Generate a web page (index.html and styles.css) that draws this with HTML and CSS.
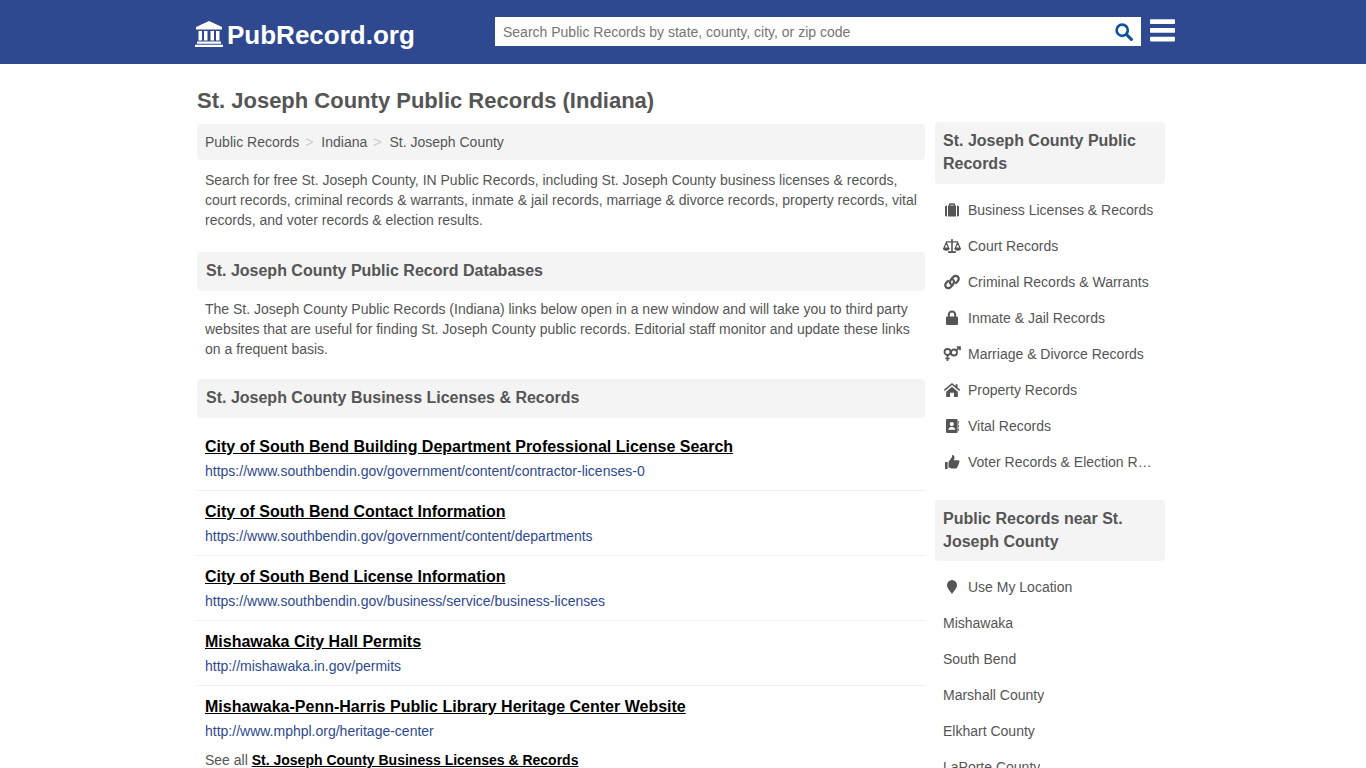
FILE: index.html
```html
<!DOCTYPE html>
<html lang="en">
<head>
<meta charset="utf-8">
<title>St. Joseph County Public Records (Indiana)</title>
<link rel="stylesheet" href="styles.css">
</head>
<body>
<header class="topbar">
  <div class="topbar-inner">
    <a class="logo" href="#">
      <svg class="logo-icon" viewBox="0 0 28 26"><path d="M14 0 L27 6 V8.500 H1 V6 Z M3.500 10 H7 V19.500 H3.500 Z M9 10 H12.500 V19.500 H9 Z M15.500 10 H19 V19.500 H15.500 Z M21 10 H24.500 V19.500 H21 Z M2 20.500 H26 V22.800 H2 Z M0 23.700 H28 V26 H0 Z" fill="#fff"/></svg>
      <span class="logo-text">PubRecord.org</span>
    </a>
    <form class="search">
      <input class="search-input" type="text" placeholder="Search Public Records by state, county, city, or zip code">
      <svg class="search-icon" viewBox="0 0 20 20"><circle cx="8" cy="8" r="6.200" fill="none" stroke="#0f5499" stroke-width="3"/><path d="M12.600 12.600 L18.200 18.200" stroke="#0f5499" stroke-width="3.400" stroke-linecap="round"/></svg>
    </form>
    <svg class="burger" viewBox="0 0 25 23"><rect y="0.300" width="25" height="4.700" rx="0.800"/><rect y="9" width="25" height="4.700" rx="0.800"/><rect y="17.700" width="25" height="4.700" rx="0.800"/></svg>
  </div>
</header>
<div class="page">
  <h1 class="title">St. Joseph County Public Records (Indiana)</h1>
  <div class="columns">
    <main class="main">
      <nav class="crumbs"><a>Public Records</a><i>&gt;</i><a>Indiana</a><i>&gt;</i><a>St. Joseph County</a></nav>
      <p class="text text-intro">Search for free St. Joseph County, IN Public Records, including St. Joseph County business licenses &amp; records, court records, criminal records &amp; warrants, inmate &amp; jail records, marriage &amp; divorce records, property records, vital records, and voter records &amp; election results.</p>
      <h2 class="band">St. Joseph County Public Record Databases</h2>
      <p class="text">The St. Joseph County Public Records (Indiana) links below open in a new window and will take you to third party websites that are useful for finding St. Joseph County public records. Editorial staff monitor and update these links on a frequent basis.</p>
      <h2 class="band">St. Joseph County Business Licenses &amp; Records</h2>
      <ul class="links">
        <li><a class="link-title">City of South Bend Building Department Professional License Search</a><span class="link-url">https://www.southbendin.gov/government/content/contractor-licenses-0</span></li>
        <li><a class="link-title">City of South Bend Contact Information</a><span class="link-url">https://www.southbendin.gov/government/content/departments</span></li>
        <li><a class="link-title">City of South Bend License Information</a><span class="link-url">https://www.southbendin.gov/business/service/business-licenses</span></li>
        <li><a class="link-title">Mishawaka City Hall Permits</a><span class="link-url">http://mishawaka.in.gov/permits</span></li>
        <li><a class="link-title">Mishawaka-Penn-Harris Public Library Heritage Center Website</a><span class="link-url">http://www.mphpl.org/heritage-center</span></li>
      </ul>
      <p class="see-all">See all <a>St. Joseph County Business Licenses &amp; Records</a></p>
    </main>
    <aside class="side">
      <h3 class="side-head side-head-top">St. Joseph County Public Records</h3>
      <ul class="side-list">
        <li><svg class="ico" viewBox="0 0 18 16"><path d="M6 3.500V2.500a1.200 1.200 0 0 1 1.200-1.200h3.600A1.200 1.200 0 0 1 12 2.500v1h-1.400v-.8H7.400v.8ZM2 5a1.500 1.500 0 0 1 1.500-1.500H4V14.500H3.500A1.500 1.500 0 0 1 2 13ZM5 3.500H13V14.500H5ZM14 3.500h.5A1.500 1.500 0 0 1 16 5V13a1.500 1.500 0 0 1-1.500 1.500H14Z"/></svg><a>Business Licenses &amp; Records</a></li>
        <li><svg class="ico" viewBox="0 0 18 16"><path d="M8.200 1h1.600v2.200h5v1.300h-5V13.300H13V15H5v-1.700h3.200V4.500h-5V3.200h5Z"/><path d="M3.300 4.500 1 10h4.600ZM14.700 4.500 12.400 10H17Z" fill="none" stroke="#555" stroke-width="1.200"/><path d="M0 10h6.600a3.300 2.800 0 0 1-6.600 0ZM11.400 10H18a3.300 2.800 0 0 1-6.600 0Z"/></svg><a>Court Records</a></li>
        <li><svg class="ico" viewBox="0 0 18 16"><path d="M8 5.500 10.500 2.800a3 3 0 0 1 4.400 4.200L13 9M10 10.500 7.500 13.200a3 3 0 0 1-4.400-4.200L5 7M7.700 10a2.600 2.600 0 0 1 0-3.700M10.300 6a2.600 2.600 0 0 1 0 3.700" fill="none" stroke="#555" stroke-width="2.300" stroke-linecap="round"/></svg><a>Criminal Records &amp; Warrants</a></li>
        <li><svg class="ico" viewBox="0 0 18 16"><path d="M5.800 7V4.700a3.200 3.200 0 0 1 6.400 0V7" fill="none" stroke="#555" stroke-width="2"/><rect x="3" y="6.500" width="12" height="8.500" rx="1.300"/></svg><a>Inmate &amp; Jail Records</a></li>
        <li><svg class="ico" viewBox="0 0 18 16"><circle cx="4.500" cy="6" r="3" fill="none" stroke="#555" stroke-width="1.800"/><circle cx="11" cy="6.500" r="3" fill="none" stroke="#555" stroke-width="1.800"/><path d="M4.500 9v6M2.300 12.500h4.400M13.200 4.300 16.500 1.300M13.800 1H17V4.200" fill="none" stroke="#555" stroke-width="1.700"/></svg><a>Marriage &amp; Divorce Records</a></li>
        <li><svg class="ico" viewBox="0 0 18 16"><path d="M9 1 0.800 7.800l.9 1.100L9 3l7.300 5.900.9-1.100L14.500 5.600V2.200h-2v1.800Z"/><path d="M3.200 9.700 9 4.800l5.800 4.900V15H11V10.800H7V15H3.200Z"/></svg><a>Property Records</a></li>
        <li><svg class="ico" viewBox="0 0 18 16"><path fill-rule="evenodd" d="M4.300 1h9a1.300 1.300 0 0 1 1.300 1.300v11.400a1.300 1.300 0 0 1-1.300 1.300h-9A1.300 1.300 0 0 1 3 13.700V2.300A1.300 1.300 0 0 1 4.300 1Zm4.500 3a2.100 2.100 0 1 0 0 4.200 2.100 2.100 0 0 0 0-4.200ZM5.300 11.800h7c0-1.700-1.500-2.800-3.500-2.800s-3.500 1.100-3.500 2.800Z"/><path d="M15 3h.8v2.500H15ZM15 6.800h.8v2.500H15ZM15 10.500h.8V13H15Z"/></svg><a>Vital Records</a></li>
        <li><svg class="ico" viewBox="0 0 18 16"><path d="M2 8h2.600V15H2ZM5.500 8 9 3V1c1.800 0 2.500 1 2.500 2.500 0 1-.4 2-.7 2.700H15c1 0 1.500.7 1.500 1.400 0 .6-.3 1-.7 1.300.3.800 0 1.500-.6 1.900.2.800-.1 1.500-.8 1.800.1 1.200-.6 1.900-1.700 1.900H9.500c-1.500 0-2.500-.7-4-1Z"/></svg><a>Voter Records &amp; Election Records</a></li>
      </ul>
      <h3 class="side-head side-head-near">Public Records near St. Joseph County</h3>
      <ul class="side-list">
        <li><svg class="ico" viewBox="0 0 18 16"><path d="M9 15C7.500 12.500 4 9.500 4 6.300a5 5.300 0 0 1 10 0C14 9.500 10.500 12.500 9 15Z"/></svg><a>Use My Location</a></li>
        <li class="plain"><a>Mishawaka</a></li>
        <li class="plain"><a>South Bend</a></li>
        <li class="plain"><a>Marshall County</a></li>
        <li class="plain"><a>Elkhart County</a></li>
        <li class="plain"><a>LaPorte County</a></li>
      </ul>
    </aside>
  </div>
</div>
</body>
</html>
```

FILE: styles.css
```css
* { box-sizing: border-box; }
html, body { margin: 0; padding: 0; height: 768px; overflow: hidden; }
body { font-family: "Liberation Sans", Arial, sans-serif; font-size: 14px; line-height: 20px; color: #555; background: #fff; }
ul { list-style: none; margin: 0; padding: 0; }
h1, h2, h3, p { margin: 0; }

.topbar { height: 64px; background: #2e4990; }
.topbar-inner { width: 980px; margin-left: 195px; height: 64px; display: flex; align-items: flex-start; }
.logo { display: flex; align-items: flex-start; width: 300px; color: #fff; text-decoration: none; padding-top: 20px; }
.logo-icon { width: 28px; height: 26px; margin-top: 1px; margin-right: 4px; }
.logo-text { font-size: 26px; line-height: 30px; font-weight: 700; }
.search { position: relative; width: 646px; height: 29px; margin-top: 17px; background: #fff; }
.search-input { width: 100%; height: 100%; border: 0; outline: 0; background: transparent; padding: 0 40px 0 8px; font: 14px "Liberation Sans", Arial, sans-serif; color: #555; }
.search-input::placeholder { color: #757575; opacity: 1; }
.search-icon { position: absolute; right: 8px; top: 6px; width: 18px; height: 18px; }
.burger { width: 25px; height: 23px; margin-left: 9px; margin-top: 19px; fill: #fff; }

.page { margin-left: 197px; width: 968px; }
.title { font-size: 22px; line-height: 30px; font-weight: 700; padding-top: 22px; box-sizing: content-box; height: 30px; }
.columns { display: flex; gap: 10px; align-items: flex-start; }
.main { width: 728px; padding-top: 8px; }
.side { width: 230px; padding-top: 6px; }

.crumbs { height: 36px; background: #f4f4f4; border-radius: 4px; padding: 8px; display: flex; }
.crumbs i { font-style: normal; color: #ccc; margin: 0 8px 0 6px; }
.text { padding: 8px 8px 0; }
.text-intro { padding: 10px 8px 2px; }
.band { height: 39px; margin-top: 20px; background: #f4f4f4; border-radius: 4px; padding: 0 9px; font-size: 16px; line-height: 37px; font-weight: 700; }

.links { padding-top: 8px; }
.links li { height: 65px; padding: 10px 8px 0; border-bottom: 1px solid #eee; }
.links li:last-child { border-bottom: 0; height: 64px; }
.link-title { display: block; font-size: 16px; line-height: 22px; font-weight: 700; color: #000; text-decoration: underline; }
.link-url { display: block; line-height: 20px; margin-top: 3px; color: #2e4990; }
.see-all { padding: 0 8px; line-height: 20px; }
.see-all a { font-weight: 700; color: #000; text-decoration: underline; }

.side-head { background: #f4f4f4; border-radius: 4px; padding: 7px 8px 8px; font-size: 16px; line-height: 23px; font-weight: 700; }
.side-head-top { padding-bottom: 9px; }
.side-head-near { margin-top: 20px; }
.side-list { padding-top: 8px; }
.side-list li { height: 36px; display: flex; align-items: center; padding: 0 10px 0 8px; }
.side-list a { white-space: nowrap; overflow: hidden; text-overflow: ellipsis; }
.ico { width: 18px; height: 16px; flex: none; margin-right: 7px; fill: #555; }
```
